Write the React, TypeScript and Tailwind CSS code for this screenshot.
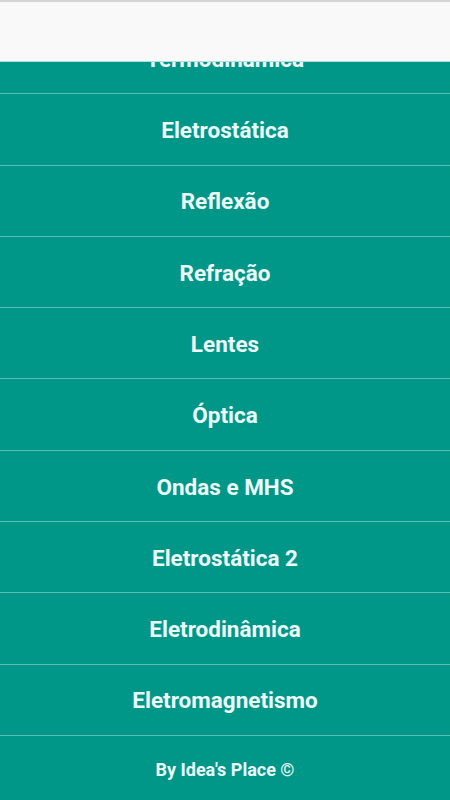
const TOPICS = [
  'Termodinâmica',
  'Eletrostática',
  'Reflexão',
  'Refração',
  'Lentes',
  'Óptica',
  'Ondas e MHS',
  'Eletrostática 2',
  'Eletrodinâmica',
  'Eletromagnetismo',
]

export default function App() {
  return (
    <div
      className="relative w-[450px] h-[800px] overflow-hidden bg-[#009688]"
      style={{ fontFamily: 'Roboto, "Liberation Sans", sans-serif' }}
    >
      {/* Toolbar */}
      <div className="absolute top-0 left-0 right-0 z-10 h-[62px] bg-[#f9f9f9] border-t-2 border-[#d4d4d4] border-b border-b-[#b2dfdb]" />

      {/* Lista */}
      <div className="flex flex-col mt-[23px]">
        {TOPICS.map(topic => (
          <div
            key={topic}
            className="h-[71.3px] pt-[3px] flex items-center justify-center border-b border-[#5ebdb3] text-[22.5px] font-bold text-[#ecfaf8]"
          >
            {topic}
          </div>
        ))}
        <div className="h-[64px] pt-[3px] flex items-center justify-center text-[18px] font-bold text-[#ecfaf8]">
          By Idea's Place ©
        </div>
      </div>
    </div>
  )
}
